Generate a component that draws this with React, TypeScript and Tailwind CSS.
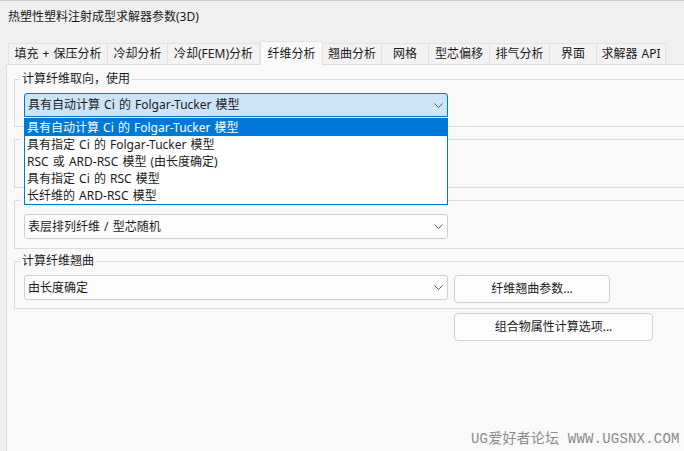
import React from 'react';

const tabs = [
    { label: '填充 + 保压分析', w: 'w-[100px]' },
    { label: '冷却分析', w: 'w-[60px]' },
    { label: '冷却(FEM)分析', w: 'w-[92px]' },
    { label: '纤维分析', w: 'w-[63px]', active: true },
    { label: '翘曲分析', w: 'w-[59px]' },
    { label: '网格', w: 'w-[47px]' },
    { label: '型芯偏移', w: 'w-[61px]' },
    { label: '排气分析', w: 'w-[60px]' },
    { label: '界面', w: 'w-[47px]' },
    { label: '求解器 API', w: 'w-[69px]' },
];

const options = [
    '具有自动计算 Ci 的 Folgar-Tucker 模型',
    '具有指定 Ci 的 Folgar-Tucker 模型',
    'RSC 或 ARD-RSC 模型 (由长度确定)',
    '具有指定 Ci 的 RSC 模型',
    '长纤维的 ARD-RSC 模型',
];

const Chevron = () => (
    <svg width="9" height="5" viewBox="0 0 9 5" className="shrink-0">
        <path d="M0.5 0.5 L4.5 4.5 L8.5 0.5" fill="none" stroke="#5c5c5c" strokeWidth="1" />
    </svg>
);

const Combo = ({ value, active }: { value: string; active?: boolean }) => (
    <div
        className={
            active
                ? 'w-[424px] h-[24px] flex items-center justify-between pl-[3px] pr-[4px] border border-[#0078d4] bg-[#cce4f7] rounded-t-[3px]'
                : 'w-[424px] h-[25px] flex items-center justify-between pl-[3px] pr-[4px] border border-[#d0d0d0] bg-[#fdfdfd] rounded-[3px]'
        }
    >
        <span className="leading-[16px]">{value}</span>
        <Chevron />
    </div>
);

const Group = ({ label, children }: { label?: string; children: React.ReactNode }) => (
    <fieldset className="ml-[7px] w-[700px] border border-[#dcdcdc] pl-[9px] pt-[6px] pb-[9px] mb-[4px]">
        <legend className="-ml-[4px] px-[2px] leading-[16px]">
            {label ?? <span className="inline-block w-[60px] h-[16px] align-top" />}
        </legend>
        {children}
    </fieldset>
);

const Button = ({ label, w }: { label: string; w: string }) => (
    <button className={`${w} h-[28px] flex items-center justify-center border border-[#d0d0d0] bg-[#fdfdfd] rounded-[4px] leading-[16px]`}>
        {label}
    </button>
);

export default function App() {
    return (
        <div className="relative w-[684px] h-[451px] overflow-hidden bg-[#f0f0f0] border-t border-[#cccccc] text-[12px] text-[#1a1a1a] [word-spacing:1px] font-['Noto_Sans','Noto_Sans_CJK_SC',sans-serif] flex flex-col">
            <div className="pl-[8px] pt-[8px] h-[40px] leading-[16px]">热塑性塑料注射成型求解器参数(3D)</div>

            <div className="flex items-end pl-[8px] h-[23px]">
                {tabs.map((t) =>
                    t.active ? (
                        <div
                            key={t.label}
                            className={`${t.w} h-[24px] -mb-px z-[1] flex items-center justify-center bg-[#f9f9f9] border border-b-0 border-[#e3e3e3]`}
                        >
                            {t.label}
                        </div>
                    ) : (
                        <div
                            key={t.label}
                            className={`${t.w} h-[21px] flex items-center justify-center bg-[#f3f3f3] border-r border-t border-[#e3e3e3] first:border-l`}
                        >
                            {t.label}
                        </div>
                    )
                )}
            </div>

            <div className="flex-1 ml-[6px] border-l border-t border-[#dcdcdc] bg-[#f9f9f9] pt-[6px]">
                <Group label="计算纤维取向，使用">
                    <Combo value={options[0]} active />
                </Group>
                {/* these two group captions sit under the open list */}
                <Group>
                    <Combo value="" />
                </Group>
                <Group>
                    <Combo value="表层排列纤维 / 型芯随机" />
                </Group>
                <fieldset className="ml-[7px] w-[700px] border border-[#dcdcdc] pl-[9px] pt-[6px] pb-[5px] mb-[4px]">
                    <legend className="-ml-[4px] px-[2px] leading-[16px]">计算纤维翘曲</legend>
                    <div className="flex items-start gap-[6px]">
                        <Combo value="由长度确定" />
                        <Button label="纤维翘曲参数..." w="w-[156px]" />
                    </div>
                </fieldset>
                <div className="ml-[447px]">
                    <Button label="组合物属性计算选项..." w="w-[199px]" />
                </div>
            </div>

            {/* open dropdown list */}
            <div className="absolute left-[24px] top-[117px] z-10 w-[424px] border border-[#0078d4] bg-white">
                {options.map((o, i) => (
                    <div
                        key={o}
                        className={
                            i === 0
                                ? 'h-[17px] pl-[2px] flex items-center bg-[#0078d7] text-white'
                                : 'h-[17px] pl-[2px] flex items-center'
                        }
                    >
                        {o}
                    </div>
                ))}
            </div>

            <div className="absolute left-[471px] top-[429px] text-[14px] leading-[18px] tracking-[0.2px] [word-spacing:0px] text-[#8c8c8c] font-['Liberation_Mono','Noto_Sans_CJK_SC',monospace] whitespace-nowrap">
                UG爱好者论坛 WWW.UGSNX.COM
            </div>
        </div>
    );
}
